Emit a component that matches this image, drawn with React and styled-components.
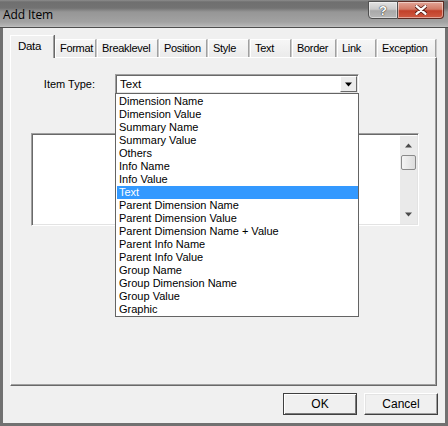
import React from 'react'
import styled, { createGlobalStyle } from 'styled-components'

const GlobalStyle = createGlobalStyle`
    html, body {
        margin : 0;
        padding : 0;
        background : #ffffff;
    }
    * {
        box-sizing : border-box;
    }
`

const uiFont = `"Liberation Sans", Arial, sans-serif`

const Window = styled.div`
    width : 448px;
    height : 426px;
    display : flex;
    flex-direction : column;
    font-family : ${uiFont};
    font-size : 11px;
    color : #000;
    overflow : hidden;
`

const TitleBar = styled.div`
    height : 28px;
    flex : none;
    display : flex;
    align-items : flex-start;
    padding-right : 4px;
    border-bottom : 1px solid #4e4e4e;
    background : linear-gradient(180deg, #8d8d8d 0px, #6f6f6f 2px, #727272 8px, #969696 12px, #a2a2a2 22px, #b4b4b4 26px, #c4c4c4 27px);
`

const Title = styled.div`
    padding : 6px 0 0 3px;
    font-family : "Open Sans", "Liberation Sans", sans-serif;
    font-size : 12px;
    letter-spacing : -0.1px;
    color : #000;
`

const Caption = styled.div`
    margin-left : auto;
    display : flex;
    margin-top : 1px;
`

const CapButton = styled.div`
    width : ${p => p.w}px;
    height : 18px;
    display : flex;
    align-items : center;
    justify-content : center;
    border : 1px solid ${p => p.close ? '#5e2a22' : '#4f4f4f'};
    border-left-width : ${p => p.close ? 0 : 1}px;
    border-radius : ${p => p.close ? '0 0 4px 0' : '0 0 0 4px'};
    background : ${p => p.close
        ? 'linear-gradient(180deg, #e3a597 0%, #d17a66 45%, #c2402a 55%, #cf5a42 100%)'
        : 'linear-gradient(180deg, #e2e2e2 0%, #c9c9c9 45%, #a9a9a9 55%, #b8b8b8 100%)'};
    box-shadow : inset 0 0 0 1px rgba(255,255,255,0.45);
`

const HelpMark = styled.span`
    color : #fff;
    font-weight : bold;
    font-size : 13px;
    text-shadow : 0 0 1px #222, 0 0 1px #222;
`

const Client = styled.div`
    flex : 1;
    display : flex;
    flex-direction : column;
    background : #f0f0f0;
    border : 3px solid #717171;
    border-top : 0;
    padding : 7px 8px 8px 7px;
`

const TabStrip = styled.div`
    display : flex;
    align-items : flex-end;
    height : 22px;
    position : relative;
    z-index : 2;
`

const Tab = styled.div`
    width : ${p => p.w}px;
    height : ${p => p.active ? 23 : 18}px;
    margin-bottom : ${p => p.active ? -1 : 0}px;
    margin-left : ${p => p.active ? 0 : 1}px;
    padding : ${p => p.active ? '4px 0 0 7px' : '2px 0 0 4px'};
    background : ${p => p.active ? '#f0f0f0' : 'linear-gradient(180deg, #f6f6f6, #ebebeb)'};
    border-top : 1px solid #ffffff;
    border-left : 1px solid #ffffff;
    border-right : 1px solid #a0a0a0;
    box-shadow : ${p => p.active ? '1px 0 0 #696969' : '1px 0 0 #c8c8c8'};
    font-size : ${p => p.active ? 11.5 : 11}px;
    letter-spacing : -0.3px;
    white-space : nowrap;
    overflow : hidden;
`

const Panel = styled.div`
    height : 329px;
    flex : none;
    position : relative;
    border-top : 1px solid #ffffff;
    border-left : 1px solid #ffffff;
    border-right : 1px solid #696969;
    border-bottom : 1px solid #696969;
    box-shadow : inset -1px -1px 0 #a0a0a0;
    display : flex;
    flex-direction : column;
    padding-top : 16px;
`

const FieldRow = styled.div`
    display : flex;
    align-items : center;
    padding-left : 24px;
    position : relative;
    z-index : 3;
`

const Label = styled.div`
    width : 60px;
    margin-right : 20px;
    text-align : right;
    font-size : 11px;
`

const Combo = styled.div`
    width : 244px;
    height : 20px;
    position : relative;
    display : flex;
    background : #fff;
    border-top : 1px solid #a0a0a0;
    border-left : 1px solid #a0a0a0;
    border-right : 1px solid #ffffff;
    border-bottom : 1px solid #ffffff;
    box-shadow : inset 1px 1px 0 #696969, inset -1px -1px 0 #e3e3e3;
`

const ComboText = styled.div`
    flex : 1;
    padding : 3px 0 0 4px;
    font-size : 11.5px;
`

const ArrowButton = styled.div`
    width : 17px;
    margin : 1px 1px 1px 0;
    display : flex;
    align-items : center;
    justify-content : center;
    background : #ececec;
    border-top : 1px solid #ffffff;
    border-left : 1px solid #ffffff;
    border-right : 1px solid #696969;
    border-bottom : 1px solid #696969;
`

const DropList = styled.div`
    position : absolute;
    top : 18px;
    left : -1px;
    width : 244px;
    height : 224px;
    background : #fff;
    border : 1px solid #646464;
    padding : 1px 0 0 1px;
`

const ListItem = styled.div`
    height : 13px;
    line-height : 13px;
    padding-left : 2px;
    font-size : 11px;
    white-space : nowrap;
    background : ${p => p.selected ? '#3399ff' : 'transparent'};
    color : ${p => p.selected ? '#fff' : '#000'};
`

const TextBox = styled.div`
    margin : 39px 0 0 20px;
    width : 388px;
    height : 93px;
    display : flex;
    justify-content : flex-end;
    background : #fff;
    border-top : 1px solid #a0a0a0;
    border-left : 1px solid #a0a0a0;
    border-right : 1px solid #ffffff;
    border-bottom : 1px solid #ffffff;
    box-shadow : inset 1px 1px 0 #696969, inset -1px -1px 0 #e3e3e3;
    padding : 2px 1px 1px 2px;
`

const ScrollBar = styled.div`
    width : 17px;
    display : flex;
    flex-direction : column;
    align-items : center;
    background : #eaeaea;
    padding : 7px 0;
`

const Thumb = styled.div`
    width : 15px;
    height : 15px;
    margin-top : 7px;
    border : 1px solid #8a8a8a;
    border-radius : 2px;
    background : linear-gradient(90deg, #f4f4f4, #dcdcdc);
`

const ScrollSpacer = styled.div`
    flex : 1;
`

const Footer = styled.div`
    display : flex;
    justify-content : flex-end;
    gap : 7px;
    margin-top : 7px;
    margin-right : -1px;
`

const Button = styled.div`
    width : 74px;
    height : 22px;
    display : flex;
    align-items : center;
    justify-content : center;
    font-size : 12px;
    background : #f0f0f0;
    border : 1px solid ${p => p.primary ? '#404040' : '#ffffff'};
    border-right-color : #404040;
    border-bottom-color : #404040;
    box-shadow : ${p => p.primary
        ? 'inset 1px 1px 0 #ffffff, inset -1px -1px 0 #7a7a7a'
        : 'inset -1px -1px 0 #a0a0a0, inset 1px 1px 0 #e3e3e3'};
`

const Triangle = ({ up, color = '#000', size = 7 }) => (
    <svg width={size} height={Math.ceil(size / 2) + 1} viewBox="0 0 7 4">
        {up
            ? <path d="M0 4 L3.5 0 L7 4 Z" fill={color} />
            : <path d="M0 0 L7 0 L3.5 4 Z" fill={color} />}
    </svg>
)

const tabs = [
    { label : 'Data', w : 44 },
    { label : 'Format', w : 41 },
    { label : 'Breaklevel', w : 61 },
    { label : 'Position', w : 48 },
    { label : 'Style', w : 41 },
    { label : 'Text', w : 41 },
    { label : 'Border', w : 44 },
    { label : 'Link', w : 39 },
    { label : 'Exception', w : 59 },
]

const items = [
    'Dimension Name',
    'Dimension Value',
    'Summary Name',
    'Summary Value',
    'Others',
    'Info Name',
    'Info Value',
    'Text',
    'Parent Dimension Name',
    'Parent Dimension Value',
    'Parent Dimension Name + Value',
    'Parent Info Name',
    'Parent Info Value',
    'Group Name',
    'Group Dimension Name',
    'Group Value',
    'Graphic',
]

const App = () => {
    return <>
        <GlobalStyle />
        <Window>
            <TitleBar>
                <Title>Add Item</Title>
                <Caption>
                    <CapButton w={30}>
                        <HelpMark>?</HelpMark>
                    </CapButton>
                    <CapButton w={46} close>
                        <svg width="12" height="10" viewBox="0 0 12 10">
                            <path d="M1 1 L11 9 M11 1 L1 9" stroke="#5a1d14" strokeWidth="4" strokeLinecap="round" />
                            <path d="M1.5 1.2 L10.5 8.8 M10.5 1.2 L1.5 8.8" stroke="#ffffff" strokeWidth="2.4" strokeLinecap="round" />
                        </svg>
                    </CapButton>
                </Caption>
            </TitleBar>
            <Client>
                <TabStrip>
                    {tabs.map((t, i) => (
                        <Tab key={t.label} w={t.w} active={i === 0}>{t.label}</Tab>
                    ))}
                </TabStrip>
                <Panel>
                    <FieldRow>
                        <Label>Item Type:</Label>
                        <Combo>
                            <ComboText>Text</ComboText>
                            <ArrowButton><Triangle /></ArrowButton>
                            <DropList>
                                {items.map(it => (
                                    <ListItem key={it} selected={it === 'Text'}>{it}</ListItem>
                                ))}
                            </DropList>
                        </Combo>
                    </FieldRow>
                    <TextBox>
                        <ScrollBar>
                            <Triangle up color="#4a4a4a" />
                            <Thumb />
                            <ScrollSpacer />
                            <Triangle color="#4a4a4a" />
                        </ScrollBar>
                    </TextBox>
                </Panel>
                <Footer>
                    <Button primary>OK</Button>
                    <Button>Cancel</Button>
                </Footer>
            </Client>
        </Window>
    </>
}

export default App
